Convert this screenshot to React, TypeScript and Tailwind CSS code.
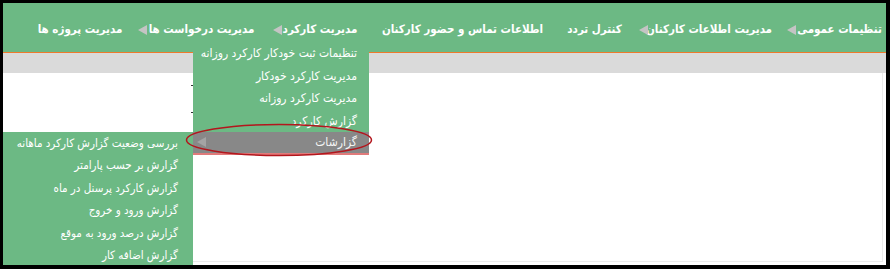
const font = { fontFamily: '"DejaVu Sans Condensed", "DejaVu Sans", sans-serif' };

type NavItem = { label: string; sub: boolean; width: string };

const navItems: NavItem[] = [
  { label: "تنظیمات عمومی", sub: true, width: "w-[83px]" },
  { label: "مدیریت اطلاعات کارکنان", sub: true, width: "w-[118px]" },
  { label: "کنترل تردد", sub: false, width: "w-[51px]" },
  { label: "اطلاعات تماس و حضور کارکنان", sub: false, width: "w-[153px]" },
  { label: "مدیریت کارکرد", sub: true, width: "w-[72px]" },
  { label: "مدیریت درخواست ها", sub: true, width: "w-[105px]" },
  { label: "مدیریت پروژه ها", sub: false, width: "w-[78px]" },
];

const workMenu = [
  "تنظیمات ثبت خودکار کارکرد روزانه",
  "مدیریت کارکرد خودکار",
  "مدیریت کارکرد روزانه",
  "گزارش کارکرد",
];

const reportsMenu = [
  "بررسی وضعیت گزارش کارکرد ماهانه",
  "گزارش بر حسب پارامتر",
  "گزارش کارکرد پرسنل در ماه",
  "گزارش ورود و خروج",
  "گزارش درصد ورود به موقع",
  "گزارش اضافه کار",
];

function LeftArrow({ className }: { className: string }) {
  return (
    <svg width="9" height="10" viewBox="0 0 9 10" className={className}>
      <polygon points="9,0 9,10 0,5" fill="currentColor" />
    </svg>
  );
}

export default function App() {
  return (
    <div className="w-[890px] h-[269px] bg-black pt-[3px] pl-[3px] pr-[4px] pb-[4px]" style={font}>
      <div className="relative w-full h-full overflow-hidden bg-white flex flex-col" dir="rtl">
        {/* top menu bar */}
        <nav className="h-[49px] shrink-0 bg-[#6cb984] flex items-center pt-[5px] pr-[5px]">
          {navItems.map((item) => (
            <div
              key={item.label}
              className={`flex items-center gap-[2px] ${item.sub ? "ml-[19px]" : "ml-[30px]"}`}
            >
              <span
                className={`${item.width} flex justify-center text-white font-bold text-[11.5px] whitespace-nowrap leading-none`}
              >
                {item.label}
              </span>
              {item.sub && <LeftArrow className="text-[#c4c4c4]" />}
            </div>
          ))}
        </nav>
        <div className="h-px shrink-0 bg-[#ee7a2c]" />
        <div className="h-[20px] shrink-0 bg-[#dadada]" />
        <div className="flex-1 mr-[3px] mb-[3px] border-r border-b border-[#ebebeb] rounded-bl-[4px]" />

        {/* stray marks from the page behind the menu */}
        <span className="absolute left-[188px] top-[82px] w-[2px] h-[1px] bg-[#333]" />
        <span className="absolute left-[188px] top-[109px] w-[2px] h-[1px] bg-[#333]" />

        {/* work dropdown */}
        <ul className="absolute left-[190px] top-[39px] w-[176px] bg-[#6cb984]">
          {workMenu.map((label) => (
            <li
              key={label}
              className="h-[22.5px] flex items-center pr-[12px] text-white text-[12px] whitespace-nowrap"
            >
              {label}
            </li>
          ))}
          <li className="h-[22.5px] flex items-center justify-between pr-[12px] pl-[4px] bg-[#888888] border-b-2 border-[#e07a7a] text-[#f4f4f4] text-[12px]">
            <span>گزارشات</span>
            <LeftArrow className="text-[#a4a4a4]" />
          </li>
        </ul>

        {/* reports submenu */}
        <ul className="absolute left-0 top-[129px] w-[190px] bg-[#6cb984]">
          {reportsMenu.map((label) => (
            <li
              key={label}
              className="h-[22.5px] flex items-center pr-[15px] text-white text-[11.5px] whitespace-nowrap"
            >
              {label}
            </li>
          ))}
        </ul>

        {/* highlight ellipse */}
        <svg
          className="absolute left-[182px] top-[120px]"
          width="188"
          height="34"
          viewBox="0 0 188 34"
        >
          <ellipse cx="94" cy="17" rx="92.5" ry="15.5" fill="none" stroke="#b3161d" strokeWidth="1.5" />
        </svg>
      </div>
    </div>
  );
}
